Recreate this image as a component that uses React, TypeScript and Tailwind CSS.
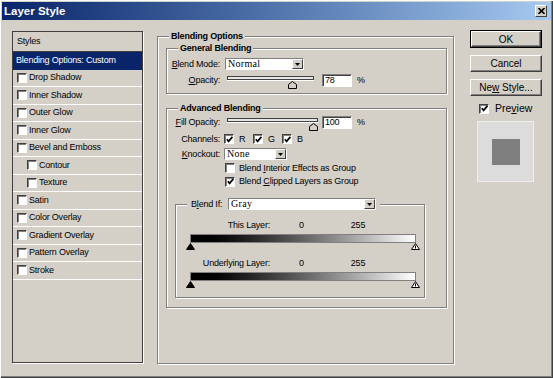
import type { ReactNode } from 'react';

const styleItems = [
  { label: 'Drop Shadow', indent: false },
  { label: 'Inner Shadow', indent: false },
  { label: 'Outer Glow', indent: false },
  { label: 'Inner Glow', indent: false },
  { label: 'Bevel and Emboss', indent: false },
  { label: 'Contour', indent: true },
  { label: 'Texture', indent: true },
  { label: 'Satin', indent: false },
  { label: 'Color Overlay', indent: false },
  { label: 'Gradient Overlay', indent: false },
  { label: 'Pattern Overlay', indent: false },
  { label: 'Stroke', indent: false },
];

function Check({ on = false }: { on?: boolean }) {
  return (
    <span className="flex h-[10px] w-[10px] shrink-0 items-center justify-center border border-t-[#404040] border-l-[#404040] border-b-white border-r-white bg-white shadow-[inset_1px_1px_0_#808080]">
      {on && (
        <svg width="7" height="7" viewBox="0 0 7 7">
          <path d="M0.8 3.2 L2.6 5.4 L6.4 0.8" stroke="#000" strokeWidth="1.7" fill="none" />
        </svg>
      )}
    </span>
  );
}

function Select({ value, width }: { value: string; width: string }) {
  return (
    <div className={`flex h-[12px] shrink-0 border border-t-[#808080] border-l-[#808080] border-b-white border-r-white bg-white ${width}`}>
      <span className="flex-1 pl-[2px] font-['Liberation_Serif',serif] text-[10px] leading-[10px] tracking-[0.3px]">{value}</span>
      <span className="flex w-[11px] items-center justify-center border border-t-white border-l-white border-b-[#404040] border-r-[#404040] bg-[#d4d0c8]">
        <svg width="5" height="3" viewBox="0 0 5 3">
          <path d="M0 0 H5 L2.5 3 Z" fill="#000" />
        </svg>
      </span>
    </div>
  );
}

function Slider({ value, width }: { value: number; width: number }) {
  return (
    <div className="relative h-[13px] shrink-0" style={{ width }}>
      <div className="mt-[4px] h-[4px] border border-[#404040] bg-[#e6e6e6] shadow-[0_1px_0_#fff]" />
      <svg
        className="absolute top-[5px]"
        style={{ left: (value / 100) * (width - 9) }}
        width="9"
        height="8"
        viewBox="0 0 9 8"
      >
        <path d="M0.5 7.5 V3.5 L4.5 0.5 L8.5 3.5 V7.5 Z" fill="#d4d0c8" stroke="#000" />
      </svg>
    </div>
  );
}

function NumBox({ value }: { value: string }) {
  return (
    <div className="flex h-[13px] w-[30px] shrink-0 items-center border border-t-[#808080] border-l-[#808080] border-b-white border-r-white bg-white pl-[2px] shadow-[inset_1px_1px_0_#404040]">
      {value}
    </div>
  );
}

function Btn({ children, primary = false }: { children: ReactNode; primary?: boolean }) {
  return (
    <div className={primary ? 'h-[18px] w-[72px] border border-black' : 'h-[17px] w-[72px]'}>
      <div className="flex h-full w-full items-center justify-center border border-t-white border-l-white border-b-[#404040] border-r-[#404040] text-[10px] tracking-normal shadow-[inset_-1px_-1px_0_#808080]">
        <span>{children}</span>
      </div>
    </div>
  );
}

function Tri({ white = false }: { white?: boolean }) {
  return (
    <svg width="9" height="7" viewBox="0 0 9 7">
      <path d="M4.5 0.5 L8.5 6.5 H0.5 Z" fill={white ? '#fff' : '#000'} stroke="#000" />
      {white && <path d="M4.5 2.5 V5.5" stroke="#000" />}
    </svg>
  );
}

function BlendBar({ label }: { label: string }) {
  return (
    <>
      <div className="flex h-[11px] items-center">
        <span className="w-[94px] text-right">{label}</span>
        <span className="ml-[29px]">0</span>
        <span className="ml-[47px]">255</span>
      </div>
      <div className="ml-[14px] mt-[3px] h-[9px] w-[226px] border border-[#808080] bg-linear-to-r from-black to-white" />
      <div className="ml-[10px] flex h-[7px] w-[234px] justify-between">
        <Tri />
        <Tri white />
      </div>
    </>
  );
}

const etched = 'border border-[#808080] shadow-[1px_1px_0_#fff,inset_1px_1px_0_#fff]';

export default function App() {
  return (
    <div className="h-[378px] w-[553px] overflow-hidden">
      <div className="flex h-[378px] w-[553px] flex-col bg-[#d4d0c8] p-[2px] font-['Liberation_Sans',Arial,sans-serif] text-[9px] leading-[11px] tracking-[-0.2px] text-black shadow-[inset_1px_1px_0_#fff,inset_-1px_-1px_0_#404040,inset_-2px_-2px_0_#808080]">
        {/* title bar */}
        <div className="flex h-[18px] shrink-0 items-center justify-between bg-linear-to-r from-[#0a246a] to-[#a6caf0] pl-[2px] pr-[4px]">
          <span className="text-[11.5px] font-bold tracking-normal text-white">Layer Style</span>
          <span className="flex h-[12px] w-[12px] items-center justify-center border border-t-white border-l-white border-b-[#404040] border-r-[#404040] bg-[#d4d0c8]">
            <svg width="7" height="6" viewBox="0 0 7 6">
              <path d="M0.5 0 L6.5 6 M6.5 0 L0.5 6" stroke="#000" strokeWidth="1.6" />
            </svg>
          </span>
        </div>

        <div className="flex items-start pl-[10px] pt-[10px]">
          {/* styles list */}
          <div className="mt-[1px] flex h-[332px] w-[131px] shrink-0 flex-col border border-[#404040] shadow-[1px_1px_0_#fff]">
            <div className="flex h-[20px] shrink-0 items-center border-b border-[#404040] pl-[4px]">Styles</div>
            <div className="flex h-[17.5px] shrink-0 items-center bg-[#0a246a] pl-[3px] text-white">Blending Options: Custom</div>
            {styleItems.map(item => (
              <div
                key={item.label}
                className={`flex h-[17.5px] shrink-0 items-center gap-[2px] border-b border-white ${item.indent ? 'pl-[14px]' : 'pl-[4px]'}`}
              >
                <Check />
                <span>{item.label}</span>
              </div>
            ))}
          </div>

          {/* blending options */}
          <fieldset className={`ml-[14px] mt-[1px] h-[333px] w-[297px] shrink-0 ${etched}`}>
            <legend className="ml-[11px] bg-[#d4d0c8] px-[2px] font-bold">Blending Options</legend>

            <fieldset className={`ml-[8px] mt-[1px] w-[281px] pb-[6px] ${etched}`}>
              <legend className="ml-[11px] bg-[#d4d0c8] px-[2px] font-bold">General Blending</legend>
              <div className="mt-[4px] flex h-[12px] items-center">
                <span className="w-[53px] text-right">
                  <u>B</u>lend Mode:
                </span>
                <span className="ml-[5px]">
                  <Select value="Normal" width="w-[79px]" />
                </span>
              </div>
              <div className="mt-[4px] flex h-[13px] items-center">
                <span className="w-[53px] text-right">
                  <u>O</u>pacity:
                </span>
                <span className="ml-[7px]">
                  <Slider value={78} width={87} />
                </span>
                <span className="ml-[8px]">
                  <NumBox value="78" />
                </span>
                <span className="ml-[5px]">%</span>
              </div>
            </fieldset>

            <fieldset className={`ml-[8px] mt-[9px] w-[281px] pb-[9px] ${etched}`}>
              <legend className="ml-[11px] bg-[#d4d0c8] px-[2px] font-bold">Advanced Blending</legend>
              <div className="flex h-[17px] items-center">
                <span className="w-[53px] text-right">
                  <u>F</u>ill Opacity:
                </span>
                <span className="ml-[7px]">
                  <Slider value={100} width={91} />
                </span>
                <span className="ml-[4px]">
                  <NumBox value="100" />
                </span>
                <span className="ml-[5px]">%</span>
              </div>
              <div className="flex h-[16px] items-center">
                <span className="w-[53px] text-right">Channels:</span>
                <div className="ml-[4px] flex">
                  {['R', 'G', 'B'].map(c => (
                    <span key={c} className="flex w-[29px] items-center gap-[5px]">
                      <Check on />
                      {c}
                    </span>
                  ))}
                </div>
              </div>
              <div className="flex h-[14px] items-center">
                <span className="w-[53px] text-right">
                  <u>K</u>nockout:
                </span>
                <span className="ml-[4px]">
                  <Select value="None" width="w-[63px]" />
                </span>
              </div>
              <div className="flex h-[14px] items-center gap-[4px] pl-[58px]">
                <Check />
                <span>
                  Blend <u>I</u>nterior Effects as Group
                </span>
              </div>
              <div className="flex h-[13px] items-center gap-[4px] pl-[58px]">
                <Check on />
                <span>
                  Blend <u>C</u>lipped Layers as Group
                </span>
              </div>

              <fieldset className={`ml-[8px] mt-[10px] w-[250px] pb-[9px] ${etched}`}>
                <legend className="ml-[11px] flex items-center bg-[#d4d0c8] px-[4px]">
                  <span className="w-[37px]">
                    B<u>l</u>end If:
                  </span>
                  <Select value="Gray" width="w-[148px]" />
                </legend>
                <div className="mt-[10px]" />
                <BlendBar label="This Layer:" />
                <div className="mt-[8px]" />
                <BlendBar label="Underlying Layer:" />
              </fieldset>
            </fieldset>
          </fieldset>

          {/* buttons */}
          <div className="ml-[16px] flex w-[72px] shrink-0 flex-col">
            <Btn primary>OK</Btn>
            <div className="mt-[7px]">
              <Btn>Cancel</Btn>
            </div>
            <div className="mt-[7px]">
              <Btn>
                Ne<u>w</u> Style...
              </Btn>
            </div>
            <div className="mt-[7px] flex h-[11px] items-center gap-[6px] pl-[9px] text-[10.5px] tracking-normal">
              <Check on />
              <span>
                Pre<u>v</u>iew
              </span>
            </div>
            <div className="ml-[7px] mt-[7px] flex h-[61px] w-[57px] items-center justify-center border border-[#eeeeee] bg-[#dcdcdc]">
              <div className="h-[26px] w-[28px] bg-[#7f7f7f]" />
            </div>
          </div>
        </div>
      </div>
    </div>
  );
}
